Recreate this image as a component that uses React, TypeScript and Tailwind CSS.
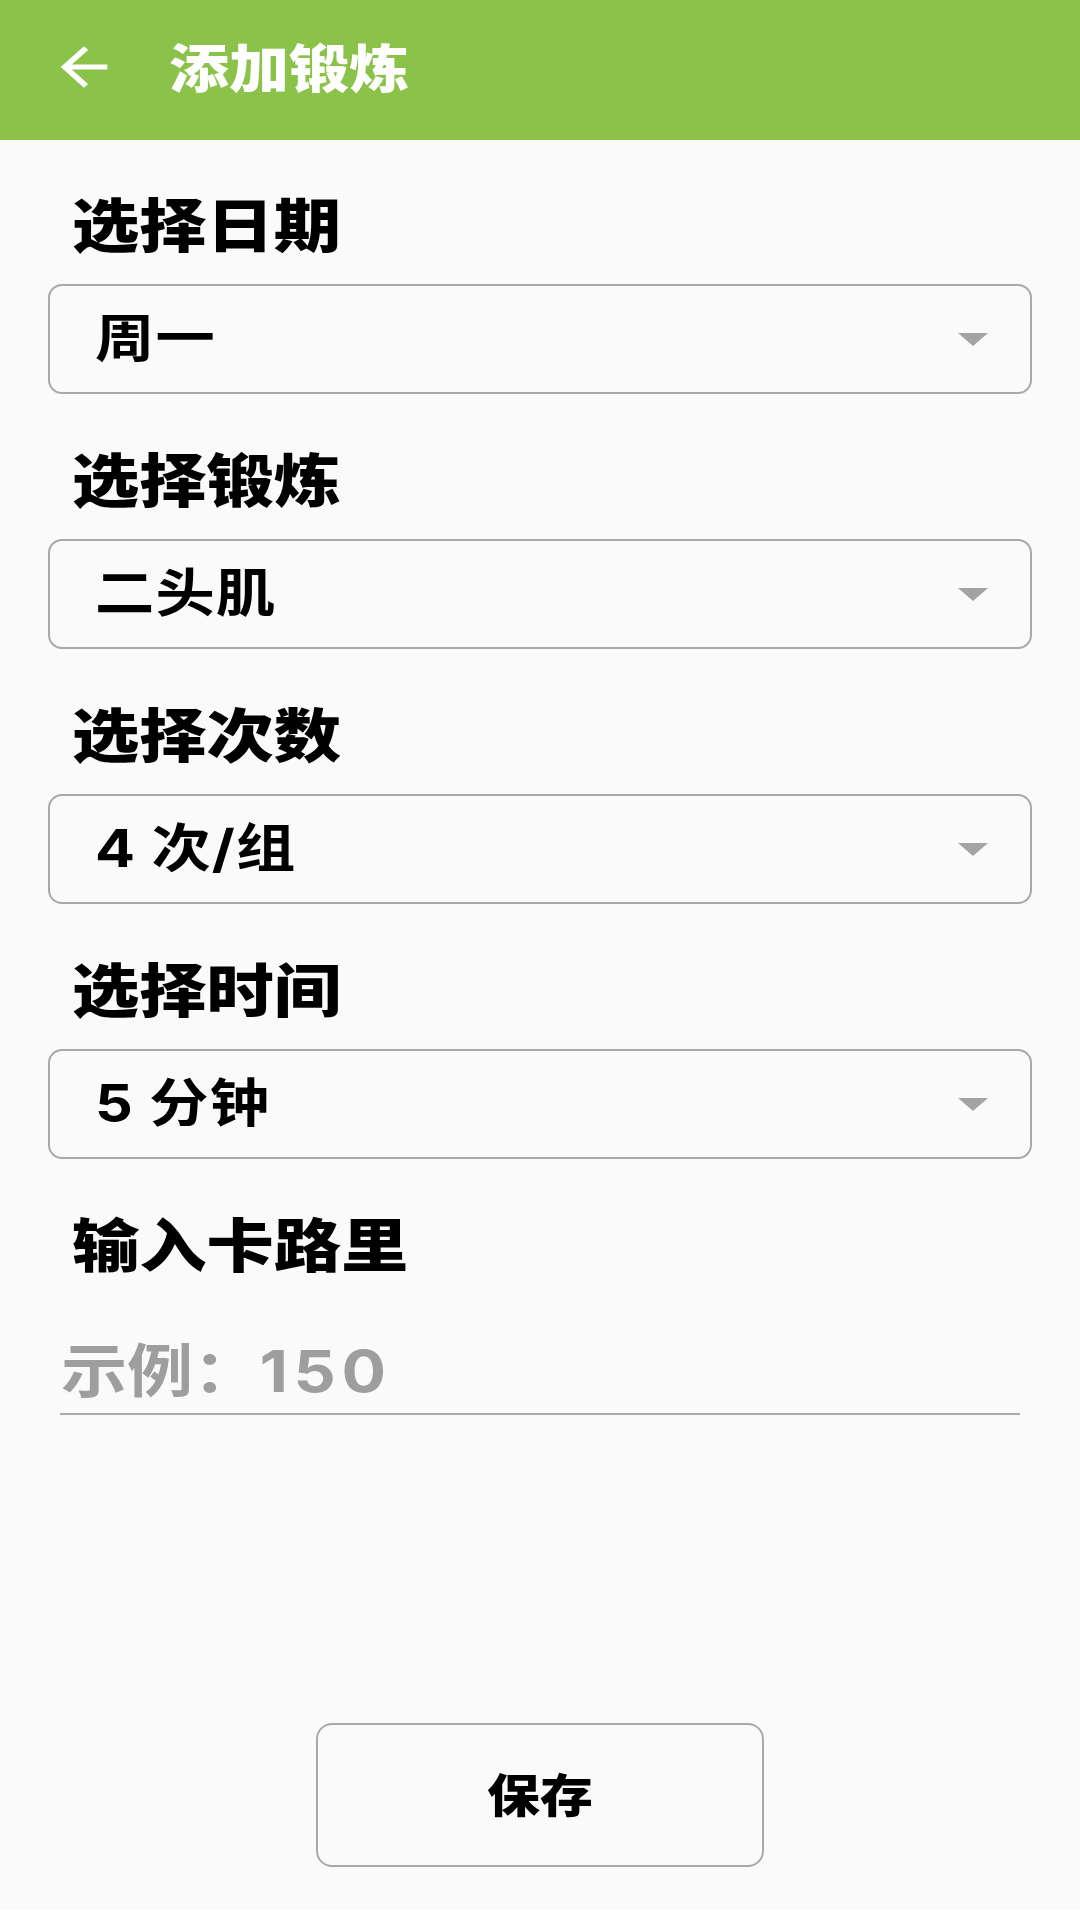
import React from "react";

const fields = [
  { label: "选择日期", value: "周一" },
  { label: "选择锻炼", value: "二头肌" },
  { label: "选择次数", value: "4 次/组" },
  { label: "选择时间", value: "5 分钟" },
];

const font = "font-['Inter','Noto_Sans_CJK_SC',sans-serif]";

const Dropdown: React.FC<{ label: string; value: string; first?: boolean }> = ({
  label,
  value,
  first,
}) => (
  <div className={first ? "" : "mt-[57px]"}>
    {/* label */}
    <div className="h-[60px] flex items-center pl-[24px]">
      <span className="inline-block origin-left scale-x-[1.16] text-[58px] leading-none font-black text-black">
        {label}
      </span>
    </div>
    {/* select box */}
    <div className="mt-[28px] h-[110px] rounded-[14px] border-2 border-[#a9a9a9] flex items-center justify-between pl-[45px] pr-[42px]">
      <span className="inline-block origin-left scale-x-[1.14] text-[52px] leading-none font-bold text-black tracking-[1px]">
        {value}
      </span>
      <svg width="30" height="13" viewBox="0 0 30 13">
        <polygon points="0,0 30,0 15,13" fill="#a3a3a3" />
      </svg>
    </div>
  </div>
);

const App: React.FC = () => {
  return (
    <div className={`w-[1080px] h-[1920px] flex flex-col bg-[#fafafa] ${font}`}>
      {/* HEADER */}
      <div className="h-[140px] shrink-0 bg-[#8bc34a] flex items-center">
        <svg
          className="ml-[49px] -mt-[6px]"
          width="70"
          height="62"
          viewBox="0 0 24 24"
          preserveAspectRatio="none"
        >
          <path
            d="M20 11H7.83l5.59-5.59L12 4l-8 8 8 8 1.41-1.41L7.83 13H20v-2z"
            fill="#ffffff"
          />
        </svg>
        <span className="ml-[50px] inline-block origin-left scale-x-[1.155] text-[52px] leading-none font-black text-white">
          添加锻炼
        </span>
      </div>

      {/* FORM */}
      <div className="px-[48px] pt-[56px]">
        {fields.map((f, i) => (
          <Dropdown key={f.label} label={f.label} value={f.value} first={i === 0} />
        ))}

        {/* calories */}
        <div className="mt-[57px] h-[60px] flex items-center pl-[24px]">
          <span className="inline-block origin-left scale-x-[1.16] text-[58px] leading-none font-black text-black">
            输入卡路里
          </span>
        </div>
        <div className="mt-[65px] ml-[12px] w-[960px] pb-[12px] border-b-2 border-[#ababab]">
          <div className="h-[60px] flex items-center pl-[1px]">
            <span className="inline-block origin-left scale-x-[1.14] text-[58px] leading-none font-bold text-[#9e9e9e]">
              示例：<span className="tracking-[5px]">150</span>
            </span>
          </div>
        </div>
      </div>

      {/* SAVE */}
      <div className="mt-auto mb-[43px] flex justify-center">
        <button
          type="button"
          className="w-[448px] h-[144px] rounded-[16px] border-2 border-[#a9a9a9] flex items-center justify-center"
        >
          <span className="inline-block scale-x-[1.15] text-[46px] leading-none font-black text-black">
            保存
          </span>
        </button>
      </div>
      <div className="h-[10px] bg-white" />
    </div>
  );
};

export default App;
